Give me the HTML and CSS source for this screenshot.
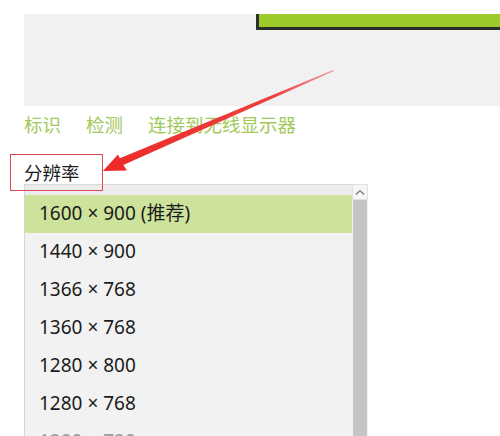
FILE: index.html
```html
<!DOCTYPE html>
<html lang="zh-CN">
<head>
<meta charset="utf-8">
<title>分辨率</title>
<link rel="stylesheet" href="styles.css">
</head>
<body>
<div class="page">
  <div class="preview">
    <div class="monitor"></div>
  </div>
  <nav class="tabs">
    <span class="tab">标识</span>
    <span class="tab">检测</span>
    <span class="tab">连接到无线显示器</span>
  </nav>
  <div class="label">分辨率</div>
  <div class="list">
    <div class="items">
      <div class="items-top"></div>
      <div class="row selected">1600 × 900 (推荐)</div>
      <div class="row">1440 × 900</div>
      <div class="row">1366 × 768</div>
      <div class="row">1360 × 768</div>
      <div class="row">1280 × 800</div>
      <div class="row">1280 × 768</div>
      <div class="row faded">1280 × 720</div>
    </div>
    <div class="scrollbar">
      <div class="scroll-up">
        <svg width="10" height="6" viewBox="0 0 10 6"><path d="M1 5.5 L5 1.5 L9 5.5" fill="none" stroke="#7a7a7a" stroke-width="1.2"/></svg>
      </div>
      <div class="track"></div>
    </div>
  </div>
  <div class="callout-box"></div>
  <svg class="arrow" width="500" height="436" viewBox="0 0 500 436">
    <defs>
      <linearGradient id="fade" x1="333" y1="70" x2="104" y2="171" gradientUnits="userSpaceOnUse">
        <stop offset="0" stop-color="#f2a0a0"/>
        <stop offset="0.25" stop-color="#ee4040"/>
        <stop offset="1" stop-color="#ee2a2a"/>
      </linearGradient>
    </defs>
    <polygon points="333,70 334,71 121,166 118,159" fill="url(#fade)"/>
    <polygon points="103,171 118,154.5 122,163 127,170.5" fill="#ee2a2a"/>
  </svg>
</div>
</body>
</html>
```
FILE: styles.css
```css
html, body {
  margin: 0;
  padding: 0;
  background: #ffffff;
}

.page {
  position: relative;
  width: 500px;
  height: 436px;
  overflow: hidden;
  font-family: "Noto Sans", "Noto Sans CJK SC", sans-serif;
  color: #1b1b1b;
}

.preview {
  margin: 14px 0 0 24px;
  height: 92px;
  background: #f1f1f1;
  display: flex;
  justify-content: flex-end;
  align-items: flex-start;
}

.monitor {
  width: 241px;
  height: 13px;
  background: #9bca2a;
  border-left: 3px solid #2c2f28;
  border-bottom: 3px solid #2c2f28;
}

.tabs {
  display: flex;
  gap: 25px;
  margin: 6px 0 0 24px;
  font-family: "Noto Sans CJK SC", sans-serif;
  font-size: 18.5px;
  line-height: 24px;
  color: #a2c95a;
}

.label {
  margin: 24px 0 0 24px;
  font-family: "Noto Sans CJK SC", sans-serif;
  font-size: 18.5px;
  line-height: 24px;
  color: #1b1b1b;
}

.list {
  display: flex;
  margin-left: 24px;
  width: 344px;
  height: 260px;
  border-left: 1px solid #d6d6d6;
  box-sizing: border-box;
}

.items {
  flex: 1;
  background: #f2f2f2;
  border-top: 1px solid #dadada;
}

.items-top {
  height: 10px;
  background: #ececec;
}

.row {
  height: 38px;
  line-height: 37px;
  padding-left: 14px;
  font-size: 19px;
  color: #1b1b1b;
  white-space: nowrap;
}

.row.selected {
  background: #cde39b;
}

.row.faded {
  color: #9a9a9a;
}

.scrollbar {
  width: 16px;
  display: flex;
  flex-direction: column;
  background: #f4f4f4;
}

.scroll-up {
  height: 16px;
  display: flex;
  align-items: center;
  justify-content: center;
  background: #f6f6f6;
  border: 1px solid #e2e2e2;
  box-sizing: border-box;
}

.track {
  flex: 1;
  margin: 0 1px;
  background: #c5c5c5;
}

.callout-box {
  position: absolute;
  left: 10px;
  top: 154px;
  width: 91px;
  height: 35px;
  border: 1px solid #e0474f;
}

.arrow {
  position: absolute;
  left: 0;
  top: 0;
  pointer-events: none;
}
```
